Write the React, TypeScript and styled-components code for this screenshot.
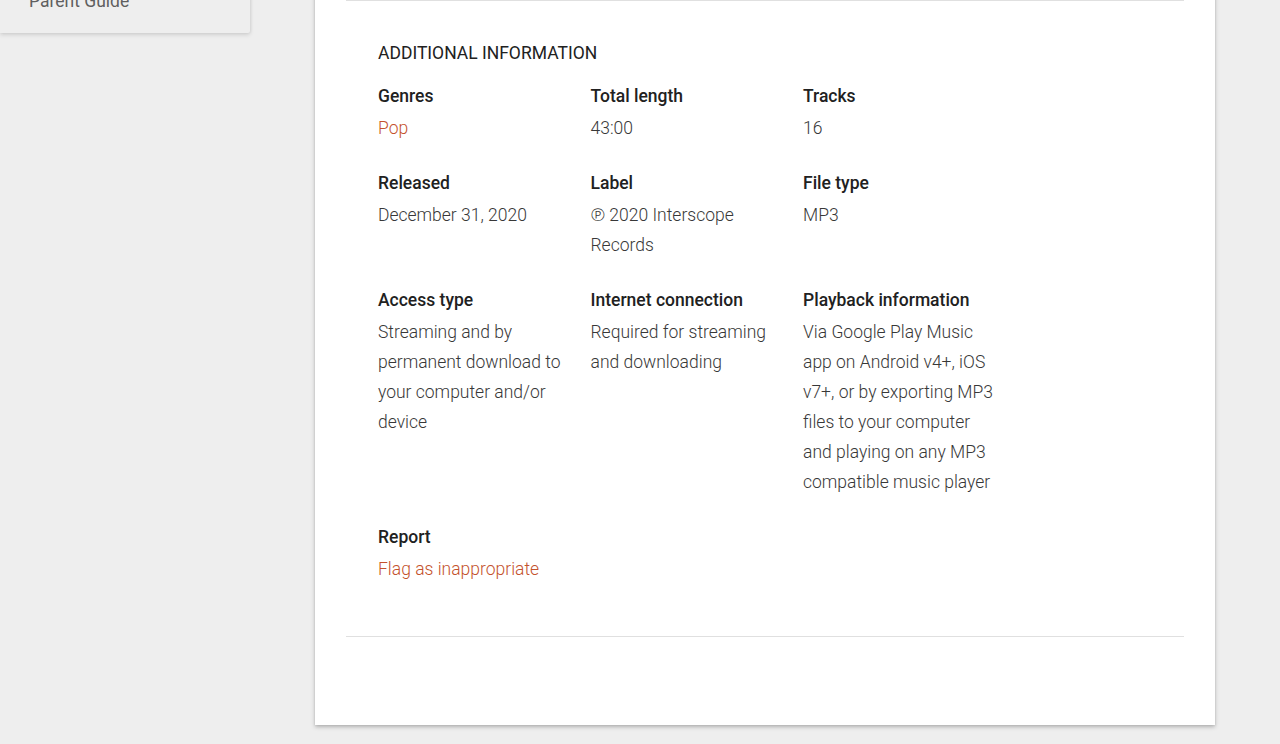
import React from "react";
import styled, { createGlobalStyle } from "styled-components";

const GlobalStyle = createGlobalStyle`
  html, body {
    margin: 0;
    padding: 0;
    background: #eeeeee;
    font-family: Roboto, "Noto Sans", Arial, sans-serif;
    overflow: hidden;
  }
`;

type Item = {
  title: string;
  lines: string[];
  link?: boolean;
};

const rows: Item[][] = [
  [
    { title: "Genres", lines: ["Pop"], link: true },
    { title: "Total length", lines: ["43:00"] },
    { title: "Tracks", lines: ["16"] },
  ],
  [
    { title: "Released", lines: ["December 31, 2020"] },
    { title: "Label", lines: ["\u2117 2020 Interscope Records"] },
    { title: "File type", lines: ["MP3"] },
  ],
  [
    {
      title: "Access type",
      lines: ["Streaming and by permanent download to your computer and/or device"],
    },
    { title: "Internet connection", lines: ["Required for streaming and downloading"] },
    {
      title: "Playback information",
      lines: [
        "Via Google Play Music app on Android v4+, iOS v7+, or by exporting MP3 files to your computer and playing on any MP3 compatible music player",
      ],
    },
  ],
  [{ title: "Report", lines: ["Flag as inappropriate"], link: true }],
];

const Page = styled.div`
  display: flex;
  align-items: flex-start;
  margin-top: -40px;
  height: 784px;
`;

const Sidebar = styled.nav`
  width: 250px;
  flex-shrink: 0;
  background: #eeeeee;
  box-shadow: 0 2px 4px rgba(0, 0, 0, 0.12), 1px 0 3px rgba(0, 0, 0, 0.06);
  border-radius: 0 0 2px 0;
`;

const SideItem = styled.div`
  padding: 29px 0 20px 29px;
  font-size: 17.5px;
  line-height: 24px;
  color: #5f5f5f;
`;

const Card = styled.main`
  width: 900px;
  margin-left: 65px;
  flex-shrink: 0;
  background: #ffffff;
  box-shadow: 0 2px 4px rgba(0, 0, 0, 0.25), 0 0 2px rgba(0, 0, 0, 0.08);
  padding: 40px 31px 88px;
  box-sizing: border-box;
`;

const Section = styled.section`
  border-top: 1px solid #e0e0e0;
  border-bottom: 1px solid #e0e0e0;
  padding: 40px 32px 52px;
`;

const Heading = styled.h2`
  margin: 0 0 19px;
  font-size: 17.5px;
  line-height: 24px;
  font-weight: 400;
  color: #212121;
`;

const Grid = styled.div`
  display: grid;
  grid-template-columns: repeat(3, 212.5px);
  row-gap: 28px;
`;

const Cell = styled.div`
  width: 192px;
`;

const Title = styled.div`
  font-size: 17.5px;
  line-height: 24px;
  font-weight: 500;
  color: #212121;
  margin-bottom: 5px;
`;

const Value = styled.div<{ $link?: boolean }>`
  font-size: 17.5px;
  line-height: 30px;
  font-weight: 300;
  color: ${(p) => (p.$link ? "#c4522d" : "#383838")};
  cursor: ${(p) => (p.$link ? "pointer" : "default")};
`;

const App: React.FC = () => {
  return (
    <>
      <GlobalStyle />
      <Page>
        <Sidebar>
          <SideItem>Parent Guide</SideItem>
        </Sidebar>
        <Card>
          <Section>
            <Heading>ADDITIONAL INFORMATION</Heading>
            <Grid>
              {rows.map((row, i) =>
                [0, 1, 2].map((j) => {
                  const item = row[j];
                  if (!item) return <div key={`${i}-${j}`} />;
                  return (
                    <Cell key={`${i}-${j}`}>
                      <Title>{item.title}</Title>
                      {item.lines.map((l) => (
                        <Value key={l} $link={item.link}>
                          {l}
                        </Value>
                      ))}
                    </Cell>
                  );
                })
              )}
            </Grid>
          </Section>
        </Card>
      </Page>
    </>
  );
};

export default App;
